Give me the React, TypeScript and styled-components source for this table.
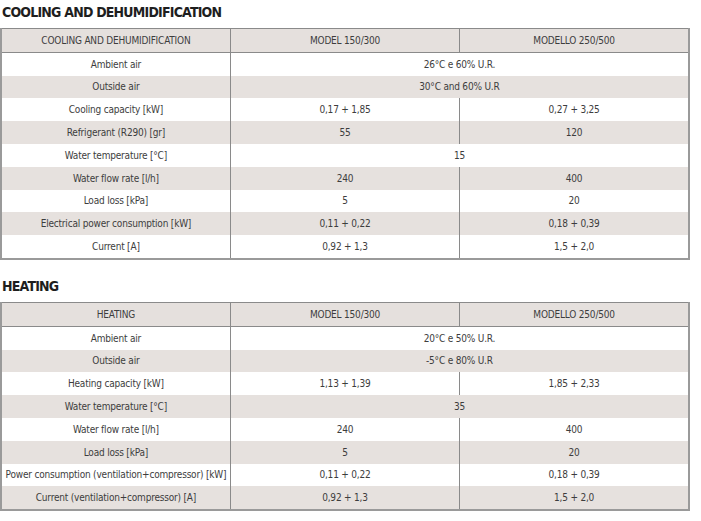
import React from "react";
import styled, { createGlobalStyle } from "styled-components";

type Row = { label: string; values: string[] };

const cooling: Row[] = [
    { label: "Ambient air", values: ["26°C e 60% U.R."] },
    { label: "Outside air", values: ["30°C and 60% U.R"] },
    { label: "Cooling capacity [kW]", values: ["0,17 + 1,85", "0,27 + 3,25"] },
    { label: "Refrigerant (R290) [gr]", values: ["55", "120"] },
    { label: "Water temperature [°C]", values: ["15"] },
    { label: "Water flow rate [l/h]", values: ["240", "400"] },
    { label: "Load loss [kPa]", values: ["5", "20"] },
    { label: "Electrical power consumption [kW]", values: ["0,11 + 0,22", "0,18 + 0,39"] },
    { label: "Current [A]", values: ["0,92 + 1,3", "1,5 + 2,0"] },
];

const heating: Row[] = [
    { label: "Ambient air", values: ["20°C e 50% U.R."] },
    { label: "Outside air", values: ["-5°C e 80% U.R"] },
    { label: "Heating capacity [kW]", values: ["1,13 + 1,39", "1,85 + 2,33"] },
    { label: "Water temperature [°C]", values: ["35"] },
    { label: "Water flow rate [l/h]", values: ["240", "400"] },
    { label: "Load loss [kPa]", values: ["5", "20"] },
    { label: "Power consumption (ventilation+compressor) [kW]", values: ["0,11 + 0,22", "0,18 + 0,39"] },
    { label: "Current (ventilation+compressor) [A]", values: ["0,92 + 1,3", "1,5 + 2,0"] },
];

const SpecTable = ({ title, rows }: { title: string; rows: Row[] }) => (
    <Section>
        <Heading>{title}</Heading>
        <Table>
            <tbody>
                <HeadRow>
                    <Cell>{title}</Cell>
                    <Cell>MODEL 150/300</Cell>
                    <Cell>MODELLO 250/500</Cell>
                </HeadRow>
                {rows.map((r, i) => (
                    <BodyRow key={r.label} shaded={i % 2 === 1}>
                        <Cell>{r.label}</Cell>
                        {r.values.length === 1 ? (
                            <Cell colSpan={2}>{r.values[0]}</Cell>
                        ) : (
                            r.values.map((v, j) => <Cell key={j}>{v}</Cell>)
                        )}
                    </BodyRow>
                ))}
            </tbody>
        </Table>
    </Section>
);

export default function App() {
    return (
        <>
            <GlobalStyle />
            <Page>
                <SpecTable title="COOLING AND DEHUMIDIFICATION" rows={cooling} />
                <SpecTable title="HEATING" rows={heating} />
            </Page>
        </>
    );
}

const GlobalStyle = createGlobalStyle`
    body{
        margin:0;
        background:#fff;
        font-family:"DejaVu Sans Condensed","DejaVu Sans",sans-serif;
    }
`;

const Page = styled.div`
    width:690px;
    padding-top:3px;
`;

const Section = styled.div`
    & + &{
        margin-top:17px;
    }
`;

const Heading = styled.h2`
    margin:0 0 6px 2px;
    font-size:14px;
    line-height:19px;
    font-weight:bold;
    color:#1e1e1e;
    letter-spacing:-0.8px;
`;

const Table = styled.table`
    width:690px;
    border-collapse:collapse;
    table-layout:fixed;
    border:2px solid #9a9a9a;
    border-top:1px solid #8a8a8a;
`;

const Cell = styled.td`
    height:22.8px;
    padding:0;
    text-align:center;
    vertical-align:middle;
    font-size:10px;
    letter-spacing:-0.2px;
    color:#3d3d3d;
    border-left:1px solid #8a8a8a;
    white-space:nowrap;
    &:first-child{
        border-left:none;
    }
`;

const HeadRow = styled.tr`
    background:#e5e0dd;
    border-bottom:1px solid #8a8a8a;
`;

const BodyRow = styled.tr<{ shaded: boolean }>`
    background:${p => (p.shaded ? "#e6e1de" : "#fff")};
`;
